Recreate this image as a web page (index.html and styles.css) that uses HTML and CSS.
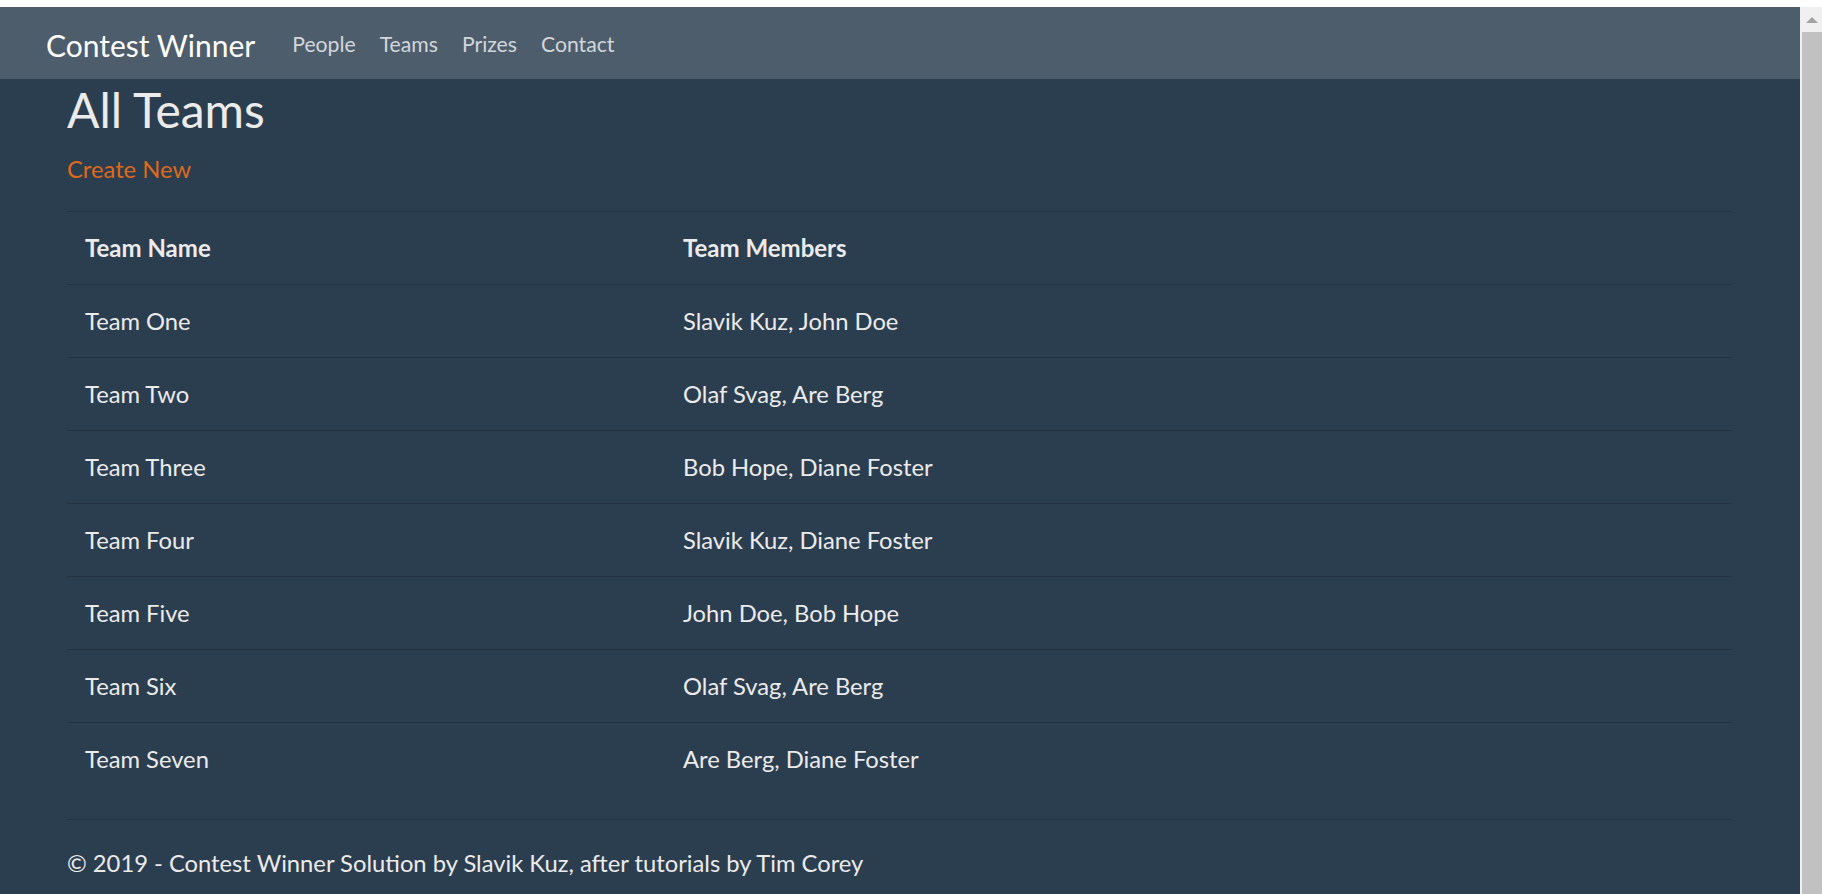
FILE: index.html
```html
<!DOCTYPE html>
<html lang="en">
<head>
<meta charset="utf-8">
<title>All Teams - Contest Winner</title>
<link rel="stylesheet" href="styles.css">
</head>
<body>
<div class="top-strip"></div>
<div class="window">
  <div class="page">
    <header class="navbar">
      <a class="brand" href="#">Contest Winner</a>
      <nav class="nav">
        <a class="nav-link" href="#">People</a>
        <a class="nav-link" href="#">Teams</a>
        <a class="nav-link" href="#">Prizes</a>
        <a class="nav-link" href="#">Contact</a>
      </nav>
    </header>
    <main class="container">
      <h1 class="title">All Teams</h1>
      <p class="actions"><a class="link" href="#">Create New</a></p>
      <table class="table">
        <colgroup>
          <col class="col-name">
          <col>
        </colgroup>
        <thead>
          <tr><th>Team Name</th><th>Team Members</th></tr>
        </thead>
        <tbody>
          <tr><td>Team One</td><td>Slavik Kuz, John Doe</td></tr>
          <tr><td>Team Two</td><td>Olaf Svag, Are Berg</td></tr>
          <tr><td>Team Three</td><td>Bob Hope, Diane Foster</td></tr>
          <tr><td>Team Four</td><td>Slavik Kuz, Diane Foster</td></tr>
          <tr><td>Team Five</td><td>John Doe, Bob Hope</td></tr>
          <tr><td>Team Six</td><td>Olaf Svag, Are Berg</td></tr>
          <tr><td>Team Seven</td><td>Are Berg, Diane Foster</td></tr>
        </tbody>
      </table>
      <footer class="footer">
        <p class="footer-text">© 2019 - Contest Winner Solution by Slavik Kuz, after tutorials by Tim Corey</p>
      </footer>
    </main>
  </div>
  <div class="scrollbar">
    <div class="scroll-arrow"><span class="arrow-up"></span></div>
    <div class="scroll-thumb"></div>
  </div>
</div>
</body>
</html>
```

FILE: styles.css
```css
* {
  box-sizing: border-box;
}

html, body {
  margin: 0;
  padding: 0;
  height: 894px;
  overflow: hidden;
  background: #ffffff;
}

body {
  font-family: Lato, "Open Sans", "Liberation Sans", sans-serif;
  color: #ebebeb;
  font-size: 23.75px;
  line-height: 36px;
}

.top-strip {
  height: 7px;
  background: #ffffff;
}

.window {
  display: flex;
  height: 887px;
}

.page {
  flex: 1;
  background: #2b3e50;
  overflow: hidden;
}

.navbar {
  height: 72px;
  background: #4e5d6c;
  display: flex;
  align-items: center;
  padding-left: 46px;
  padding-top: 4px;
}

.brand {
  font-size: 30px;
  line-height: 45px;
  color: #ffffff;
  text-decoration: none;
  margin-right: 25px;
}

.nav {
  display: flex;
}

.nav-link {
  font-size: 21.2px;
  line-height: 31.5px;
  padding: 0 12px;
  color: rgba(255, 255, 255, 0.75);
  text-decoration: none;
}

.container {
  max-width: 1710px;
  margin: 0 auto;
  padding: 0 23px 0 22px;
}

.title {
  margin: 2px 0 12px;
  font-size: 48px;
  line-height: 57.6px;
  font-weight: 400;
  color: #ebebeb;
}

.actions {
  margin: 0 0 24px;
}

.link {
  color: #df691a;
  text-decoration: none;
}

.table {
  width: 100%;
  border-collapse: collapse;
  table-layout: fixed;
  margin-bottom: 24px;
}

.col-name {
  width: 598px;
}

.table th,
.table td {
  padding: 18px;
  text-align: left;
  border-top: 1px solid rgba(0, 0, 0, 0.17);
  vertical-align: top;
}

.table th {
  font-weight: 700;
  font-size: 24px;
}

.footer {
  border-top: 1px solid rgba(0, 0, 0, 0.17);
  padding-top: 25px;
}

.footer-text {
  margin: 0;
  white-space: nowrap;
}

.scrollbar {
  width: 22px;
  border-left: 2px solid #f0f0f0;
  display: flex;
  flex-direction: column;
  background: #c1c1c1;
}

.scroll-arrow {
  height: 25px;
  background: #f0f0f0;
  display: flex;
  align-items: center;
  justify-content: center;
}

.arrow-up {
  width: 0;
  height: 0;
  border-left: 6px solid transparent;
  border-right: 6px solid transparent;
  border-bottom: 6px solid #a3a3a3;
}

.scroll-thumb {
  flex: 1;
  background: #c1c1c1;
}
```
